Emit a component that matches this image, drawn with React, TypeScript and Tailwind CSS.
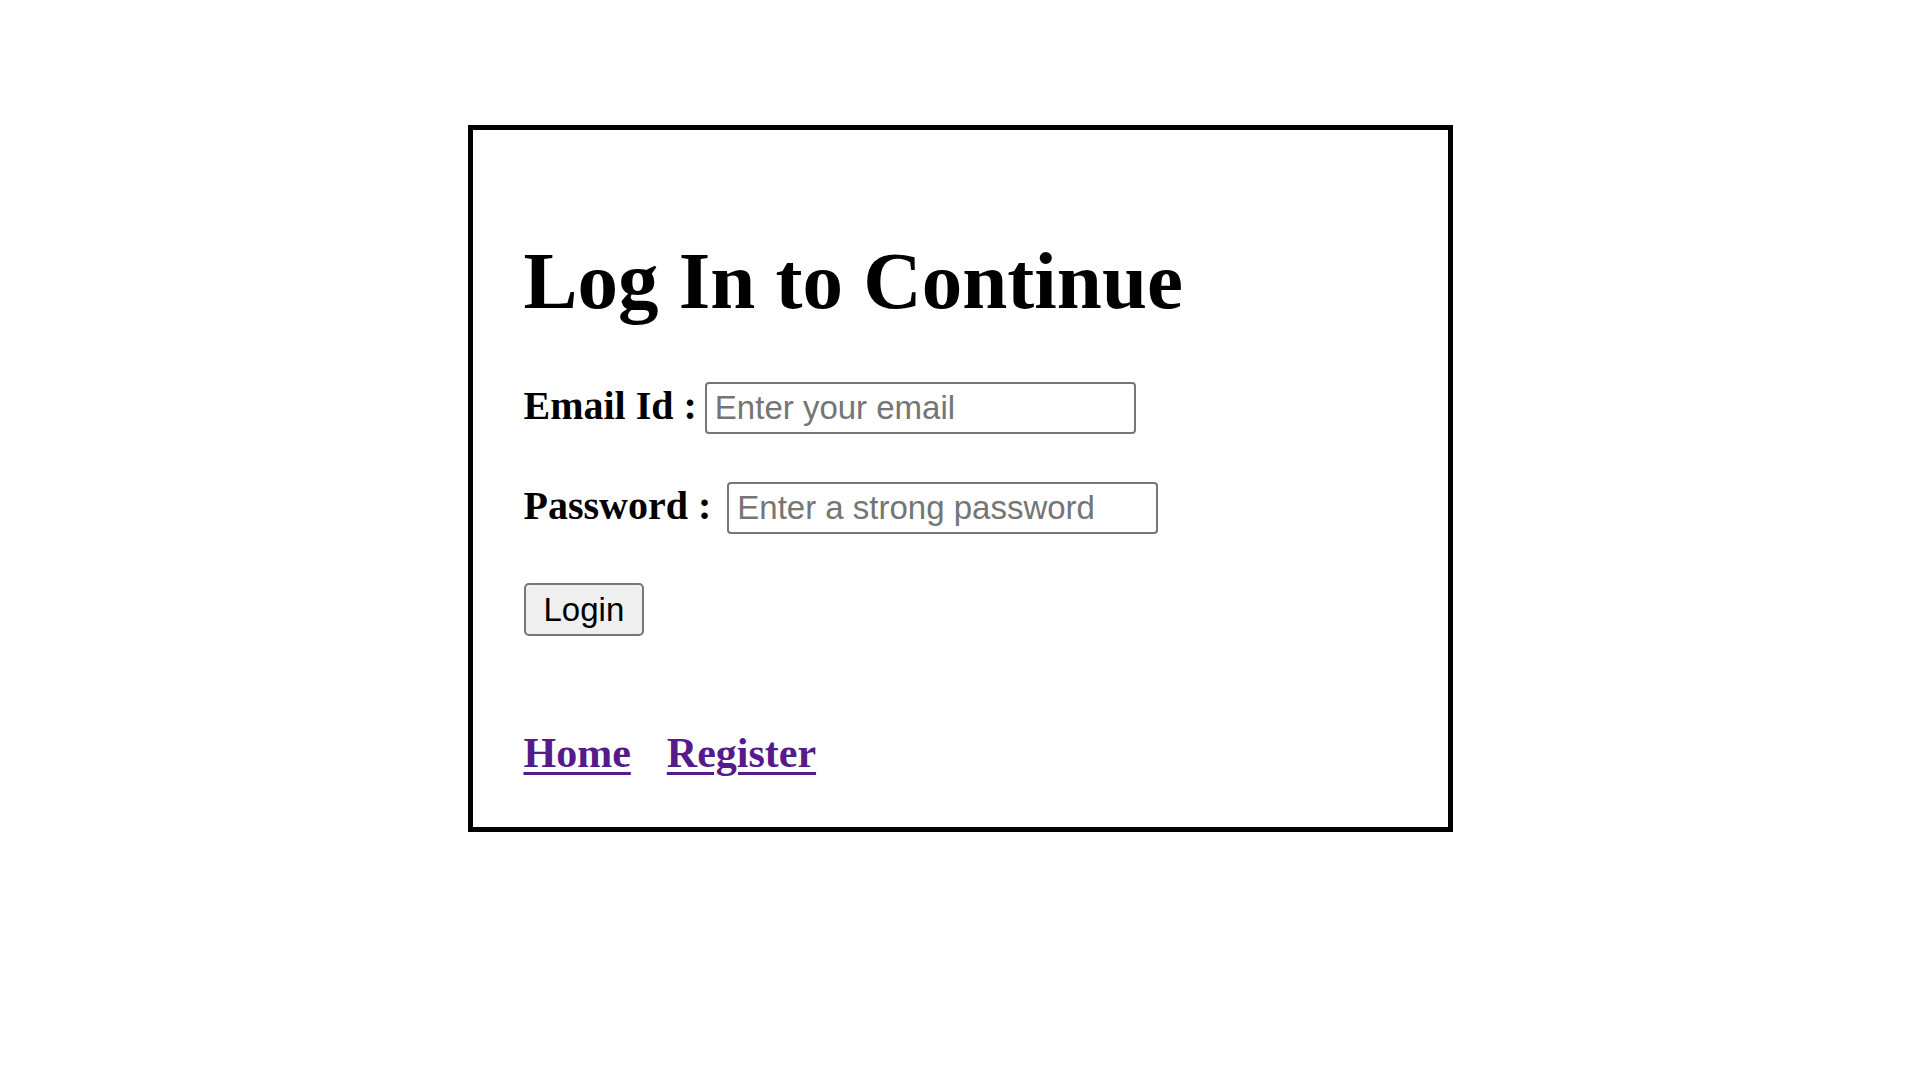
const serif = "font-['Liberation_Serif','Times_New_Roman',serif]";

const Field = ({ label, type, placeholder, className }: { label: string; type: string; placeholder: string; className?: string }) => (
  <div className={`flex items-baseline ${className ?? ''}`}>
    <label className={`${serif} text-[40px] font-bold leading-none text-black`}>{label}</label>
    <input
      type={type}
      placeholder={placeholder}
      className="h-[52px] w-[431px] rounded-[4px] border-2 border-[#767676] bg-white px-[8px] font-['Liberation_Sans',Arial,sans-serif] text-[33px] text-black outline-none placeholder:text-[#757575]"
    />
  </div>
);

export default function App() {
  return (
    <div className="min-h-screen bg-white pt-[125px]">
      <div className="mx-auto flex h-[707px] w-[985px] flex-col border-[5px] border-black pl-[51px] pt-[111px]">
        <h1 className={`${serif} text-[81px] font-bold leading-none text-black`}>Log In to Continue</h1>

        <Field label="Email Id :" type="email" placeholder="Enter your email" className="mt-[60px] gap-[8px]" />
        <Field label="Password :" type="password" placeholder="Enter a strong password" className="mt-[48px] gap-[16px]" />

        <div className="mt-[49px]">
          <button className="h-[53px] rounded-[5px] border-2 border-[#767676] bg-[#efefef] px-[18px] font-['Liberation_Sans',Arial,sans-serif] text-[33px] leading-none text-black">
            Login
          </button>
        </div>

        <div className={`mt-[96px] flex gap-[36px] ${serif} text-[42px] font-bold leading-none`}>
          <a href="#" className="text-[#551a8b] underline decoration-[3px] underline-offset-[5px]">Home</a>
          <a href="#" className="text-[#551a8b] underline decoration-[3px] underline-offset-[5px]">Register</a>
        </div>
      </div>
    </div>
  );
}
